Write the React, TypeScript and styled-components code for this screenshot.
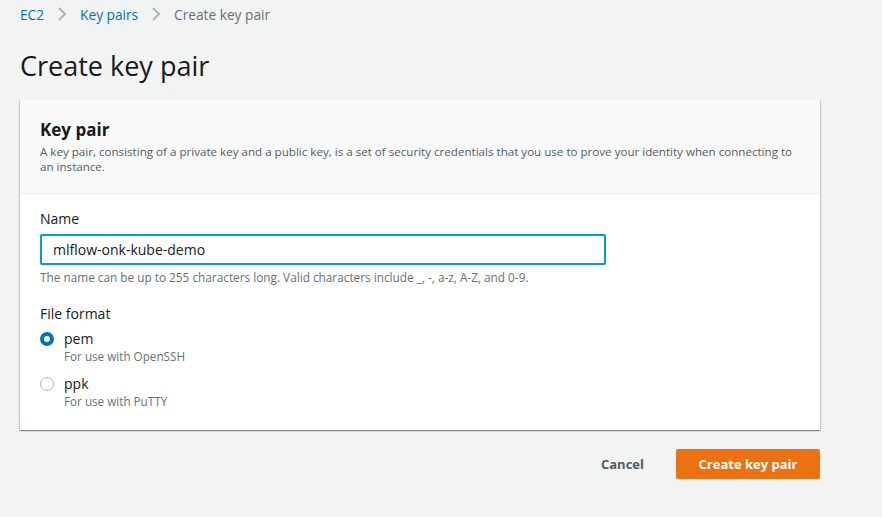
import React from "react";
import styled, { createGlobalStyle } from "styled-components";

const Global = createGlobalStyle`
  html, body { margin: 0; padding: 0; background: #f2f3f3; }
  body { font-family: "Open Sans", "Noto Sans", Arial, sans-serif; color: #16191f; }
  * { box-sizing: border-box; }
`;

const Page = styled.div`
  width: 882px;
  height: 517px;
  padding: 4px 0 0 20px;
  background: #f2f3f3;
`;

const Crumbs = styled.nav`
  display: flex;
  align-items: center;
  height: 20px;
  font-size: 13.7px;
`;

const Crumb = styled.a<{ $current?: boolean }>`
  color: ${(p) => (p.$current ? "#687078" : "#0073bb")};
  text-decoration: none;
`;

const Sep = styled.span`
  display: flex;
  align-items: center;
  margin: 0 14px 0 14px;
`;

const Title = styled.h1`
  margin: 25px 0 0;
  font-size: 27px;
  font-weight: 400;
  line-height: 34px;
  color: #16191f;
`;

const Card = styled.section`
  margin-top: 17px;
  width: 800px;
  background: #fff;
  box-shadow: 0 1px 1px 0 rgba(0, 28, 36, 0.3), 1px 1px 1px 0 rgba(0, 28, 36, 0.15),
    -1px 1px 1px 0 rgba(0, 28, 36, 0.15);
`;

const CardHeader = styled.header`
  background: #fafafa;
  border-bottom: 1px solid #eaeded;
  padding: 18px 16px 19px 20px;
`;

const CardTitle = styled.h2`
  margin: 0;
  font-size: 17px;
  font-weight: 700;
  line-height: 24px;
`;

const CardDesc = styled.p`
  margin: 2px 0 0;
  font-size: 11.6px;
  line-height: 15px;
  color: #545b64;
`;

const CardBody = styled.div`
  padding: 15px 20px 22px;
`;

const Label = styled.div`
  font-size: 14px;
  line-height: 20px;
  color: #16191f;
`;

const Input = styled.input`
  display: block;
  margin-top: 5px;
  width: 566px;
  height: 31px;
  border: 2px solid #00a1c9;
  border-radius: 2px;
  padding: 0 11px;
  font: inherit;
  font-size: 14px;
  color: #16191f;
  outline: none;
`;

const Hint = styled.div`
  margin-top: 5px;
  font-size: 11.8px;
  line-height: 15px;
  color: #687078;
`;

const Fieldset = styled.div`
  margin-top: 19px;
`;

const RadioRow = styled.label`
  display: flex;
  gap: 10px;
  margin-top: 5px;
  & + & {
    margin-top: 11px;
  }
`;

const Radio = styled.span<{ $checked?: boolean }>`
  flex: none;
  width: 14px;
  height: 14px;
  margin-top: 3px;
  border-radius: 50%;
  border: ${(p) => (p.$checked ? "4px solid #0073bb" : "1px solid #aab7b8")};
  background: #fff;
`;

const RadioText = styled.div`
  display: flex;
  flex-direction: column;
`;

const RadioLabel = styled.span`
  font-size: 14px;
  line-height: 20px;
`;

const RadioDesc = styled.span`
  font-size: 11.7px;
  line-height: 14px;
  color: #687078;
`;

const Actions = styled.div`
  width: 800px;
  display: flex;
  justify-content: flex-end;
  align-items: center;
  gap: 12px;
  margin-top: 19px;
`;

const LinkButton = styled.button`
  border: none;
  background: none;
  font: inherit;
  font-size: 13px;
  font-weight: 700;
  color: #545b64;
  padding: 0 20px;
  height: 30px;
`;

const PrimaryButton = styled.button`
  border: 1px solid #ec7211;
  background: #ec7211;
  border-radius: 2px;
  font: inherit;
  font-size: 13px;
  font-weight: 700;
  color: #fff;
  width: 144px;
  height: 30px;
  padding: 0;
`;

const Chevron = () => (
  <svg width="8" height="14" viewBox="0 0 8 14">
    <path d="M1 1l6 6-6 6" fill="none" stroke="#aab7b8" strokeWidth="2" />
  </svg>
);

export default function App() {
  return (
    <Page>
      <Global />
      <Crumbs>
        <Crumb>EC2</Crumb>
        <Sep><Chevron /></Sep>
        <Crumb>Key pairs</Crumb>
        <Sep><Chevron /></Sep>
        <Crumb $current>Create key pair</Crumb>
      </Crumbs>
      <Title>Create key pair</Title>
      <Card>
        <CardHeader>
          <CardTitle>Key pair</CardTitle>
          <CardDesc>
            A key pair, consisting of a private key and a public key, is a set of security credentials that you use to prove your identity when connecting to an instance.
          </CardDesc>
        </CardHeader>
        <CardBody>
          <Label>Name</Label>
          <Input defaultValue="mlflow-onk-kube-demo" />
          <Hint>The name can be up to 255 characters long. Valid characters include _, -, a-z, A-Z, and 0-9.</Hint>
          <Fieldset>
            <Label>File format</Label>
            <RadioRow>
              <Radio $checked />
              <RadioText>
                <RadioLabel>pem</RadioLabel>
                <RadioDesc>For use with OpenSSH</RadioDesc>
              </RadioText>
            </RadioRow>
            <RadioRow>
              <Radio />
              <RadioText>
                <RadioLabel>ppk</RadioLabel>
                <RadioDesc>For use with PuTTY</RadioDesc>
              </RadioText>
            </RadioRow>
          </Fieldset>
        </CardBody>
      </Card>
      <Actions>
        <LinkButton>Cancel</LinkButton>
        <PrimaryButton>Create key pair</PrimaryButton>
      </Actions>
    </Page>
  );
}
